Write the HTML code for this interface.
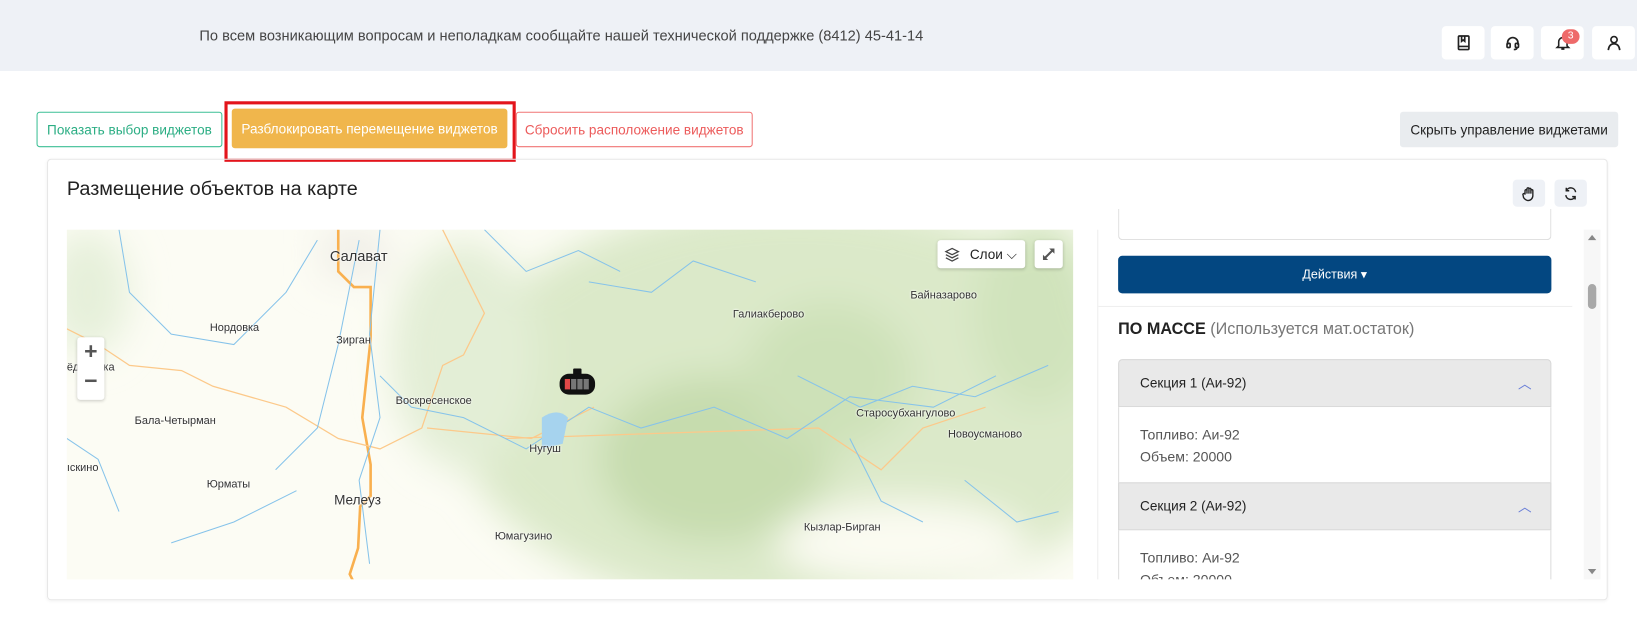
<!DOCTYPE html>
<html><head><meta charset="utf-8"><style>
*{box-sizing:border-box;margin:0;padding:0}
html,body{width:1637px;height:620px;overflow:hidden;background:#fff;font-family:"Liberation Sans","Noto Sans CJK SC",sans-serif}
#w{position:absolute;left:0;top:0;width:1568px;height:594px;transform:scale(1.044);transform-origin:0 0}
.a{position:absolute}
.top{left:0;top:0;width:1568px;height:68px;background:#eef1f6}
.ib{width:41px;height:32px;background:#fff;border-radius:4px;top:25px;display:flex;align-items:center;justify-content:center}
.btn{top:107px;height:34px;border-radius:3px;font-size:13px;display:flex;align-items:center;justify-content:center}
.lbl{position:absolute;font-size:10.5px;color:#333;white-space:nowrap;text-shadow:0 0 2px #fff,0 0 2px #fff}
.acc-h{left:1071px;width:415px;height:46px;background:#e9e9e9;border:1px solid #d8d8d8;font-size:13px;color:#222;padding:14px 20px}
.acc-b{left:1071px;width:415px;border-left:1px solid #ddd;border-right:1px solid #ddd;font-size:13.5px;color:#555;padding:0 20px;line-height:21px;background:#fff}
</style></head><body><div id="w">
<div class="a top"></div>
<div class="a" style="left:191px;top:26px;font-size:14px;color:#444">По всем возникающим вопросам и неполадкам сообщайте нашей технической поддержке (8412) 45-41-14</div>
<div class="a ib" style="left:1381px"><svg width="16" height="16" viewBox="0 0 16 16" fill="none" stroke="#222" stroke-width="1.6"><rect x="3" y="1.5" width="10" height="13" rx="1"/><path d="M3 11.5h10M6 1.5v5l1.5-1.2L9 6.5v-5"/></svg></div>
<div class="a ib" style="left:1428px"><svg width="16" height="16" viewBox="0 0 16 16" fill="none" stroke="#222" stroke-width="1.6"><path d="M3 10V8a5 5 0 0 1 10 0v2"/><rect x="2.5" y="8.5" width="3" height="4" rx="1"/><rect x="10.5" y="8.5" width="3" height="4" rx="1"/><path d="M12 12.5q0 2-3 2"/></svg></div>
<div class="a ib" style="left:1476px"><svg width="16" height="16" viewBox="0 0 16 16" fill="none" stroke="#222" stroke-width="1.5"><path d="M4 11V7a4 4 0 0 1 8 0v4l1.5 1.5h-11zM6.5 14h3"/></svg></div>
<div class="a" style="left:1496px;top:28px;width:17px;height:14px;border-radius:7px;background:#ee6a6a;color:#fff;font-size:10px;text-align:center;line-height:14px">3</div>
<div class="a ib" style="left:1525px"><svg width="16" height="16" viewBox="0 0 16 16" fill="none" stroke="#222" stroke-width="1.6"><circle cx="8" cy="5" r="3"/><path d="M2.5 15c.5-4 2.5-6 5.5-6s5 2 5.5 6"/></svg></div>

<div class="a btn" style="left:35px;width:178px;border:1px solid #3cbf95;color:#2cae84">Показать выбор виджетов</div>
<div class="a" style="left:215px;top:97px;width:279px;height:58px;border:3px solid #e3141b"></div>
<div class="a btn" style="left:222px;top:104px;width:264px;height:38px;background:#f0b64c;color:#fff">Разблокировать перемещение виджетов</div>
<div class="a btn" style="left:494px;width:227px;border:1px solid #f07575;color:#ec5b5b">Сбросить расположение виджетов</div>
<div class="a btn" style="left:1341px;width:209px;background:#e9ecef;color:#222">Скрыть управление виджетами</div>

<div class="a" style="left:45px;top:152px;width:1495px;height:423px;border:1px solid #e7e7e7;border-radius:4px;box-shadow:0 1px 3px rgba(0,0,0,.05)"></div>
<div class="a" style="left:64px;top:171px;font-size:19px;color:#222">Размещение объектов на карте</div>
<div class="a" style="left:1449px;top:172px;width:31px;height:26px;background:#eef1f6;border-radius:4px;display:flex;align-items:center;justify-content:center"><svg width="15" height="15" viewBox="0 0 16 16" fill="none" stroke="#222" stroke-width="1.4"><path d="M4 9V5a1 1 0 0 1 2 0v3V3a1 1 0 0 1 2 0v5V3.5a1 1 0 0 1 2 0V8V5a1 1 0 0 1 2 0v5a5 5 0 0 1-5 5c-2 0-3-1-4.5-3L2 9.5a1 1 0 0 1 2-1z"/></svg></div>
<div class="a" style="left:1489px;top:172px;width:31px;height:26px;background:#eef1f6;border-radius:4px;display:flex;align-items:center;justify-content:center"><svg width="15" height="15" viewBox="0 0 16 16" fill="none" stroke="#222" stroke-width="1.5"><path d="M13 6.5A5 5 0 0 0 3.5 5M3 9.5A5 5 0 0 0 12.5 11M3.5 2v3h3M12.5 14v-3h-3"/></svg></div>

<div class="a" style="left:64px;top:220px;width:964px;height:335px;overflow:hidden;background:#fcfcf4">
<svg class="a" style="left:0;top:0" width="964" height="335">
<defs><filter id="b"><feGaussianBlur stdDeviation="18"/></filter></defs>
<g filter="url(#b)">
<ellipse cx="700" cy="170" rx="330" ry="200" fill="#dbe9c9"/>
<ellipse cx="380" cy="120" rx="70" ry="110" fill="#e3eed6"/>
<ellipse cx="620" cy="220" rx="110" ry="80" fill="#c6dcae"/>
<ellipse cx="730" cy="140" rx="80" ry="70" fill="#cde1b8"/>
<ellipse cx="930" cy="80" rx="60" ry="90" fill="#d0e3bc"/>
<ellipse cx="20" cy="60" rx="40" ry="60" fill="#e6f0da"/>
<ellipse cx="800" cy="300" rx="120" ry="40" fill="#fbfbf2"/>
<rect x="245" y="0" width="60" height="45" fill="#efede6"/>
</g>
<path d="M260 0v40l15 15h16v50l-8 75 8 45v30l-10 10-2 40-8 25 15 30" stroke="#f9b04f" stroke-width="2.5" fill="none"/>
<path d="M0 95L30 110 60 130 110 135 140 150 210 170 260 200 300 210 340 190 360 130 380 120 400 80 380 40 360 0M345 190l100 10 60-30M420 200l300-10 60 40 40-40 60-20" stroke="#fcc98a" stroke-width="1.2" fill="none"/>
<path d="M50 0l10 60 40 40 60 10 50-50 30-50M200 230l40-40 20-80 20-100M100 300l60-20 60-30M300 0l-10 100 10 80-20 60 10 80M300 140l30 30 50 10 60 30 60-40 50 20 70-20 70 30 60-40 80 10 60-30M400 0l40 40 50-20 40 20M500 50l60 10 40-30 60 20M700 140l60 30 50-20 60 10 70-30M750 200l30 60 40 20M860 240l50 40 40-10M0 200l30 20 20 50" stroke="#86c3ea" stroke-width="1" fill="none"/>
<path d="M455 180q15-10 25 0l-5 25-20 5z" fill="#a6d3ee"/>
</svg>
<div class="lbl" style="left:252px;top:17px;font-size:14px">Салават</div>
<div class="lbl" style="left:137px;top:88px">Нордовка</div>
<div class="lbl" style="left:258px;top:100px">Зирган</div>
<div class="lbl" style="left:315px;top:158px">Воскресенское</div>
<div class="lbl" style="left:65px;top:177px">Бала-Четырман</div>
<div class="lbl" style="left:443px;top:204px">Нугуш</div>
<div class="lbl" style="left:134px;top:238px">Юрматы</div>
<div class="lbl" style="left:256px;top:251px;font-size:13px">Мелеуз</div>
<div class="lbl" style="left:410px;top:288px">Юмагузино</div>
<div class="lbl" style="left:638px;top:75px">Галиакберово</div>
<div class="lbl" style="left:808px;top:57px">Байназарово</div>
<div class="lbl" style="left:756px;top:170px">Старосубхангулово</div>
<div class="lbl" style="left:844px;top:190px">Новоусманово</div>
<div class="lbl" style="left:706px;top:279px">Кызлар-Бирган</div>
<div class="lbl" style="left:0;top:126px">ёдоровка</div>
<div class="lbl" style="left:0;top:222px">ıскино</div>
<div class="a" style="left:10px;top:103px;width:26px;height:60px;background:#fff;border-radius:3px;box-shadow:0 1px 3px rgba(0,0,0,.2);font-size:22px;font-weight:bold;color:#555;text-align:center;line-height:28px">+<br>−</div>
<div class="a" style="left:834px;top:10px;width:84px;height:27px;background:#fff;border-radius:3px;box-shadow:0 1px 3px rgba(0,0,0,.2);font-size:13px;color:#222;padding:6px 0 0 31px">Слои ⌵</div>
<svg class="a" style="left:840px;top:16px" width="16" height="16" viewBox="0 0 16 16" fill="none" stroke="#444" stroke-width="1.2"><path d="M8 2l6 3-6 3-6-3zM2 8l6 3 6-3M2 11l6 3 6-3"/></svg>
<div class="a" style="left:927px;top:10px;width:27px;height:27px;background:#fff;border-radius:3px;box-shadow:0 1px 3px rgba(0,0,0,.2)"><svg width="27" height="27" viewBox="0 0 27 27" stroke="#555" stroke-width="2" fill="#555"><path d="M9 18l9-9"/><path d="M19 8v5l-5-5zM8 19v-5l5 5z" stroke="none"/></svg></div>
<svg class="a" style="left:470px;top:133px" width="38" height="28" viewBox="0 0 38 28"><rect x="15" y="0" width="8" height="6" rx="1" fill="#111"/><rect x="2" y="5" width="34" height="20" rx="9" fill="#111"/><rect x="7" y="10" width="5" height="10" fill="#e24848"/><rect x="13" y="10" width="5" height="10" fill="#777"/><rect x="19" y="10" width="5" height="10" fill="#777"/><rect x="25" y="10" width="5" height="10" fill="#777"/></svg>
</div>

<div class="a" style="left:1051px;top:220px;width:1px;height:335px;background:#eee"></div>
<div class="a" style="left:1071px;top:200px;width:415px;height:30px;border:1px solid #ddd;border-top:none;border-radius:0 0 4px 4px"></div>
<div class="a" style="left:1071px;top:245px;width:415px;height:36px;background:#034781;border-radius:4px;color:#fff;font-size:12px;text-align:center;line-height:36px">Действия ▾</div>
<div class="a" style="left:1052px;top:293px;width:454px;height:1px;background:#eee"></div>
<div class="a" style="left:1071px;top:307px;font-size:15.5px;color:#777"><b style="color:#222">ПО МАССЕ</b> (Используется мат.остаток)</div>
<div class="a acc-h" style="top:344px;border-radius:4px 4px 0 0">Секция 1 (Аи-92)<span style="position:absolute;right:18px;top:12px;color:#6a7fd8">︿</span></div>
<div class="a acc-b" style="top:390px;height:72px;padding-top:16px">Топливо: Аи-92<br>Объем: 20000</div>
<div class="a acc-h" style="top:462px">Секция 2 (Аи-92)<span style="position:absolute;right:18px;top:12px;color:#6a7fd8">︿</span></div>
<div class="a acc-b" style="top:508px;height:47px;padding-top:16px;overflow:hidden">Топливо: Аи-92<br>Объем: 20000</div>
<div class="a" style="left:1052px;top:555px;width:460px;height:19px;background:#fff"></div>
<div class="a" style="left:1517px;top:220px;width:16px;height:335px;background:#f7f7f7"></div>
<div class="a" style="left:1521px;top:225px;width:0;height:0;border:4px solid transparent;border-bottom:5px solid #888;border-top:none"></div>
<div class="a" style="left:1521px;top:272px;width:8px;height:24px;background:#a8a8a8;border-radius:4px"></div>
<div class="a" style="left:1521px;top:545px;width:0;height:0;border:4px solid transparent;border-top:5px solid #888;border-bottom:none"></div>
</div></body></html>
